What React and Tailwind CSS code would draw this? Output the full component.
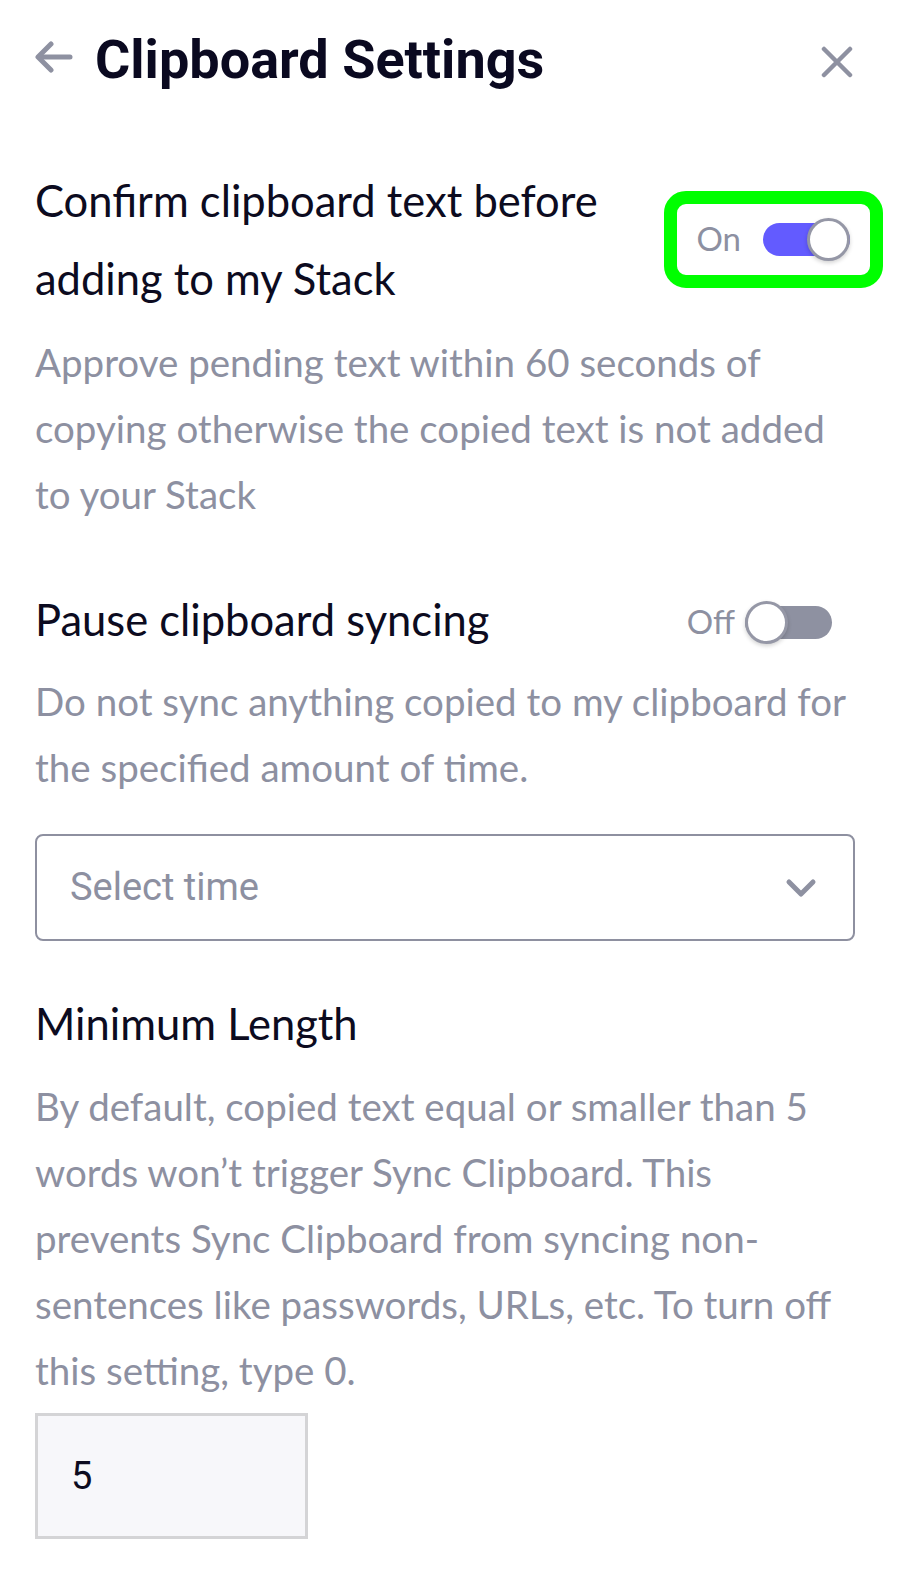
import React from 'react'

function Toggle({ on }) {
  return (
    <div className={`relative h-[33px] w-[87px] rounded-full ${on ? 'bg-[#635bff]' : 'bg-[#8e91a1]'}`}>
      <div
        className={`absolute top-[-5px] h-[43px] w-[43px] rounded-full border-[3px] border-[#9597a6] bg-white shadow-[0_2px_4px_rgba(0,0,0,0.18)] ${on ? 'right-0' : 'left-0'}`}
      />
    </div>
  )
}

function Desc({ children, className = '' }) {
  return <p className={`text-[38.5px] leading-[66px] text-[#8d90a1] ${className}`}>{children}</p>
}

function Heading({ children, className = '' }) {
  return <h2 className={`text-[43.5px] leading-[78px] text-[#0c0b20] ${className}`}>{children}</h2>
}

export default function App() {
  return (
    <div className="min-h-[1584px] w-[898px] bg-white pl-[35px] pr-[43px] font-['Lato',sans-serif]">
      {/* header */}
      <div className="flex h-[120px] items-center justify-between">
        <div className="flex items-center gap-[22px]">
          <svg width="38" height="34" viewBox="0 0 38 34" fill="none" stroke="#8e91a1" strokeWidth="5" strokeLinecap="round" strokeLinejoin="round" className="mt-[-6px]">
            <path d="M35 17H4" />
            <path d="M16 4 3 17l13 13" />
          </svg>
          <h1 className="font-['Roboto',sans-serif] text-[54px] font-bold leading-none text-[#0a0920]">Clipboard Settings</h1>
        </div>
        <svg width="32" height="32" viewBox="0 0 32 32" fill="none" stroke="#8e91a1" strokeWidth="4.5" strokeLinecap="round" className="mr-[2px] mt-[4px]">
          <path d="M3 3l26 26M29 3 3 29" />
        </svg>
      </div>

      {/* confirm clipboard */}
      <div className="mt-[41px] flex items-center justify-between">
        <Heading className="w-[600px]">Confirm clipboard text before adding to my Stack</Heading>
        <div className="mr-[-28px] flex h-[97px] items-center gap-[22px] rounded-[22px] border-[13px] border-[#00ff00] pl-[19px] pr-[20px]">
          <span className="text-[33px] text-[#8d90a1]">On</span>
          <Toggle on />
        </div>
      </div>
      <Desc className="mt-[12px]">
        Approve pending text within 60 seconds of copying otherwise the copied text is not added to your Stack
      </Desc>

      {/* pause syncing */}
      <div className="mt-[53px] flex items-center justify-between">
        <Heading>Pause clipboard syncing</Heading>
        <div className="mr-[23px] mt-[6px] flex items-center gap-[10px]">
          <span className="text-[33px] text-[#8d90a1]">Off</span>
          <Toggle on={false} />
        </div>
      </div>
      <Desc className="mt-[10px]">Do not sync anything copied to my clipboard for the specified amount of time.</Desc>

      <div className="mt-[34px] flex h-[107px] items-center justify-between rounded-[8px] border-[2px] border-[#8e90a0] pl-[33px] pr-[36px]">
        <span className="font-['Roboto',sans-serif] text-[38px] text-[#8d90a1]">Select time</span>
        <svg width="32" height="20" viewBox="0 0 32 20" fill="none" stroke="#8e91a1" strokeWidth="5" strokeLinecap="round" strokeLinejoin="round">
          <path d="M4 4l12 12L28 4" />
        </svg>
      </div>

      {/* minimum length */}
      <Heading className="mt-[43px]">Minimum Length</Heading>
      <Desc className="mt-[11px]">
        By default, copied text equal or smaller than 5 words won’t trigger Sync Clipboard. This prevents Sync Clipboard from syncing non-sentences like passwords, URLs, etc. To turn off this setting, type 0.
      </Desc>
      <div className="mt-[10px] flex h-[126px] w-[273px] items-center border-[3px] border-[#d4d4d6] bg-[#f7f7fa] pl-[33px] font-['Roboto',sans-serif] text-[38px] text-[#0c0b20]">
        5
      </div>
    </div>
  )
}
